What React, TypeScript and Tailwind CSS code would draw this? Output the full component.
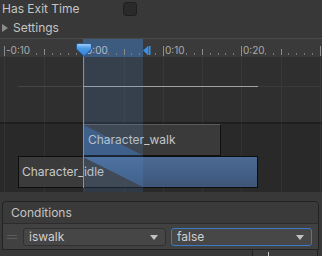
const majors = [4, 84, 163, 241, 320];
const labels = ["-0:10", "0:00", "0:10", "0:20"];

function HeaderTicks() {
  const items: React.ReactNode[] = [];
  majors.forEach((m, i) => {
    items.push(<div key={"b" + i} className="absolute top-[8px] h-[10px] w-px bg-[#8c8c8c]" style={{ left: m }} />);
    if (labels[i]) {
      items.push(
        <span
          key={"l" + i}
          className={"absolute top-[6px] text-[10px] leading-[12px] " + (i === 1 ? "text-[#b3bccb]" : "text-[#ababab]")}
          style={{ left: m + 2 }}
        >
          {labels[i]}
        </span>
      );
    }
    if (i < majors.length - 1) {
      const next = majors[i + 1];
      const skip = i === 0 ? 3 : 2;
      for (let s = 1; s < 10; s++) {
        const x = Math.round(m + ((next - m) * s) / 10);
        if (s === 5) {
          items.push(<div key={"m" + i + s} className="absolute top-[11px] h-[6px] w-px bg-[#8a8a8a]" style={{ left: x }} />);
        } else if (s > skip) {
          items.push(<div key={"d" + i + s} className="absolute top-[15px] h-[2px] w-px bg-[#7a7a7a]" style={{ left: x }} />);
        }
      }
    }
  });
  return <>{items}</>;
}

function GridLines() {
  const xs: number[] = [];
  majors.forEach((m, i) => {
    xs.push(m);
    if (i < majors.length - 1) xs.push(Math.round((m + majors[i + 1]) / 2));
  });
  return (
    <>
      {xs.map((x) => (
        <div key={x} className="absolute top-[19px] bottom-0 w-px bg-[#ffffff0c]" style={{ left: x }} />
      ))}
    </>
  );
}

function Timeline() {
  return (
    <div className="relative w-[322px] h-[154px] overflow-hidden">
      <div className="flex flex-col h-full">
        <div className="h-[19px] bg-[#3a3a3a] border-t border-[#4a4a4a]" />
        <div className="h-[65px] bg-[#2f2f2f]" />
        <div className="h-[2px] bg-[#1e1e1e]" />
        <div className="flex-1 bg-[#292929]" />
      </div>

      {/* selected range in header */}
      <div className="absolute left-[83px] top-px w-[60px] h-[18px] bg-[#3d5a7f]" />
      <GridLines />
      <HeaderTicks />

      {/* transition curve */}
      <div className="absolute left-[18px] top-[48px] w-[65px] h-px bg-[#464646]" />
      <div className="absolute left-[84px] top-[48px] w-[174px] h-px bg-[#a0a0a0]" />
      <div className="absolute left-[258px] top-[48px] w-[64px] h-px bg-[#3a3a3a]" />

      {/* Character_walk */}
      <div className="absolute left-[83px] top-[86px] w-[138px] h-[32px] border border-[#111] border-t-[#5a5a5a] bg-[#3a3a3a] overflow-hidden">
        <svg className="absolute inset-0" width="136" height="31" viewBox="0 0 136 31" preserveAspectRatio="none">
          <polygon points="0,0 0,31 60,31" fill="#3a5578" />
        </svg>
        <span className="absolute left-[4px] top-[7px] leading-[16px] text-[#c6c6c6]">Character_walk</span>
      </div>

      {/* Character_idle */}
      <div className="absolute left-[18px] top-[118px] w-[240px] h-[32px] border border-[#0e0e0e] bg-[#3b3b3b] overflow-hidden">
        <svg className="absolute inset-0" width="238" height="30" viewBox="0 0 238 30" preserveAspectRatio="none">
          <defs>
            <linearGradient id="idleBlue" x1="0" y1="0" x2="0" y2="1">
              <stop offset="0" stopColor="#4b6a95" />
              <stop offset="1" stopColor="#3d5679" />
            </linearGradient>
          </defs>
          <polygon points="64,0 238,0 238,30 124,30" fill="url(#idleBlue)" />
        </svg>
        <span className="absolute left-[3px] top-[7px] leading-[16px] text-[#c8c8c8]">Character_idle</span>
      </div>

      {/* selection tint over body */}
      <div className="absolute left-[83px] top-[19px] w-[60px] bottom-0 bg-[#5ea0f026]" />

      {/* playhead */}
      <div className="absolute left-[83px] top-[18px] w-px h-[132px] bg-[#8e8e8e]" />
      <svg className="absolute left-[76px] top-[5px]" width="16" height="14" viewBox="0 0 16 14">
        <defs>
          <linearGradient id="head" x1="0" y1="0" x2="0" y2="1">
            <stop offset="0" stopColor="#a9d3f7" />
            <stop offset="0.35" stopColor="#4c9be6" />
            <stop offset="1" stopColor="#2c7fd6" />
          </linearGradient>
        </defs>
        <path d="M2 0.5 H14 Q15.5 0.5 15.5 2 V6 L8 13.5 L0.5 6 V2 Q0.5 0.5 2 0.5 Z" fill="url(#head)" stroke="#1f4f86" strokeWidth="0.8" />
      </svg>
      <svg className="absolute left-[143px] top-[8px]" width="8" height="9" viewBox="0 0 8 9">
        <polygon points="0,4.5 5,0 5,9" fill="#3b8fe8" />
        <rect x="5.5" y="0" width="2" height="9" fill="#3b8fe8" />
      </svg>
    </div>
  );
}

function Dropdown({ label, focused }: { label: string; focused?: boolean }) {
  return (
    <div
      className={
        "relative h-[18px] rounded-[3px] border flex items-center pl-[5px] text-[#d0d0d0] " +
        (focused ? "border-[#3a7ac4] bg-[#474747]" : "border-[#303030] bg-[#464646]")
      }
    >
      {label}
      <span className="absolute right-[7px] top-[6px] w-0 h-0 border-x-[4px] border-t-[5px] border-x-transparent border-t-[#c2c2c2]" />
    </div>
  );
}

export default function App() {
  return (
    <div className="w-[322px] h-[256px] overflow-hidden bg-[#383838] text-[12px] text-[#c4c4c4] font-['Inter','Noto_Sans',sans-serif]">
      <div className="h-[17px] flex items-center pl-[2px]">
        <span className="w-[121px]">Has Exit Time</span>
        <div className="w-[14px] h-[14px] rounded-[3px] bg-[#2a2a2a] border border-[#1f1f1f]" />
      </div>
      <div className="h-[21px] flex items-center pl-[2px] gap-[5px]">
        <span className="w-0 h-0 border-y-[4px] border-l-[6px] border-y-transparent border-l-[#8c8c8c]" />
        <span>Settings</span>
      </div>

      <Timeline />

      <div className="mt-[9px] ml-[2px] w-[317px] border border-[#232323] rounded-t-[4px]">
        <div className="h-[22px] flex items-center pl-[8px] bg-[#3a3a3a] border-b border-[#2c2c2c] rounded-t-[4px]">
          Conditions
        </div>
        <div className="h-[25px] flex items-center pl-[4px] bg-[#414141]">
          <div className="w-[10px] mr-[6px] flex flex-col gap-[2px]">
            <div className="h-px bg-[#5c5c5c]" />
            <div className="h-px bg-[#5c5c5c]" />
          </div>
          <div className="w-[143px]">
            <Dropdown label="iswalk" />
          </div>
          <div className="w-[141px] ml-[5px]">
            <Dropdown label="false" focused />
          </div>
        </div>
      </div>
      <div className="ml-[252px] w-[66px] h-[6px] border-l border-r border-[#232323] bg-[#3c3c3c] relative">
        <div className="absolute left-[15px] top-[2px] w-px h-[4px] bg-[#c8c8c8]" />
      </div>
    </div>
  );
}
